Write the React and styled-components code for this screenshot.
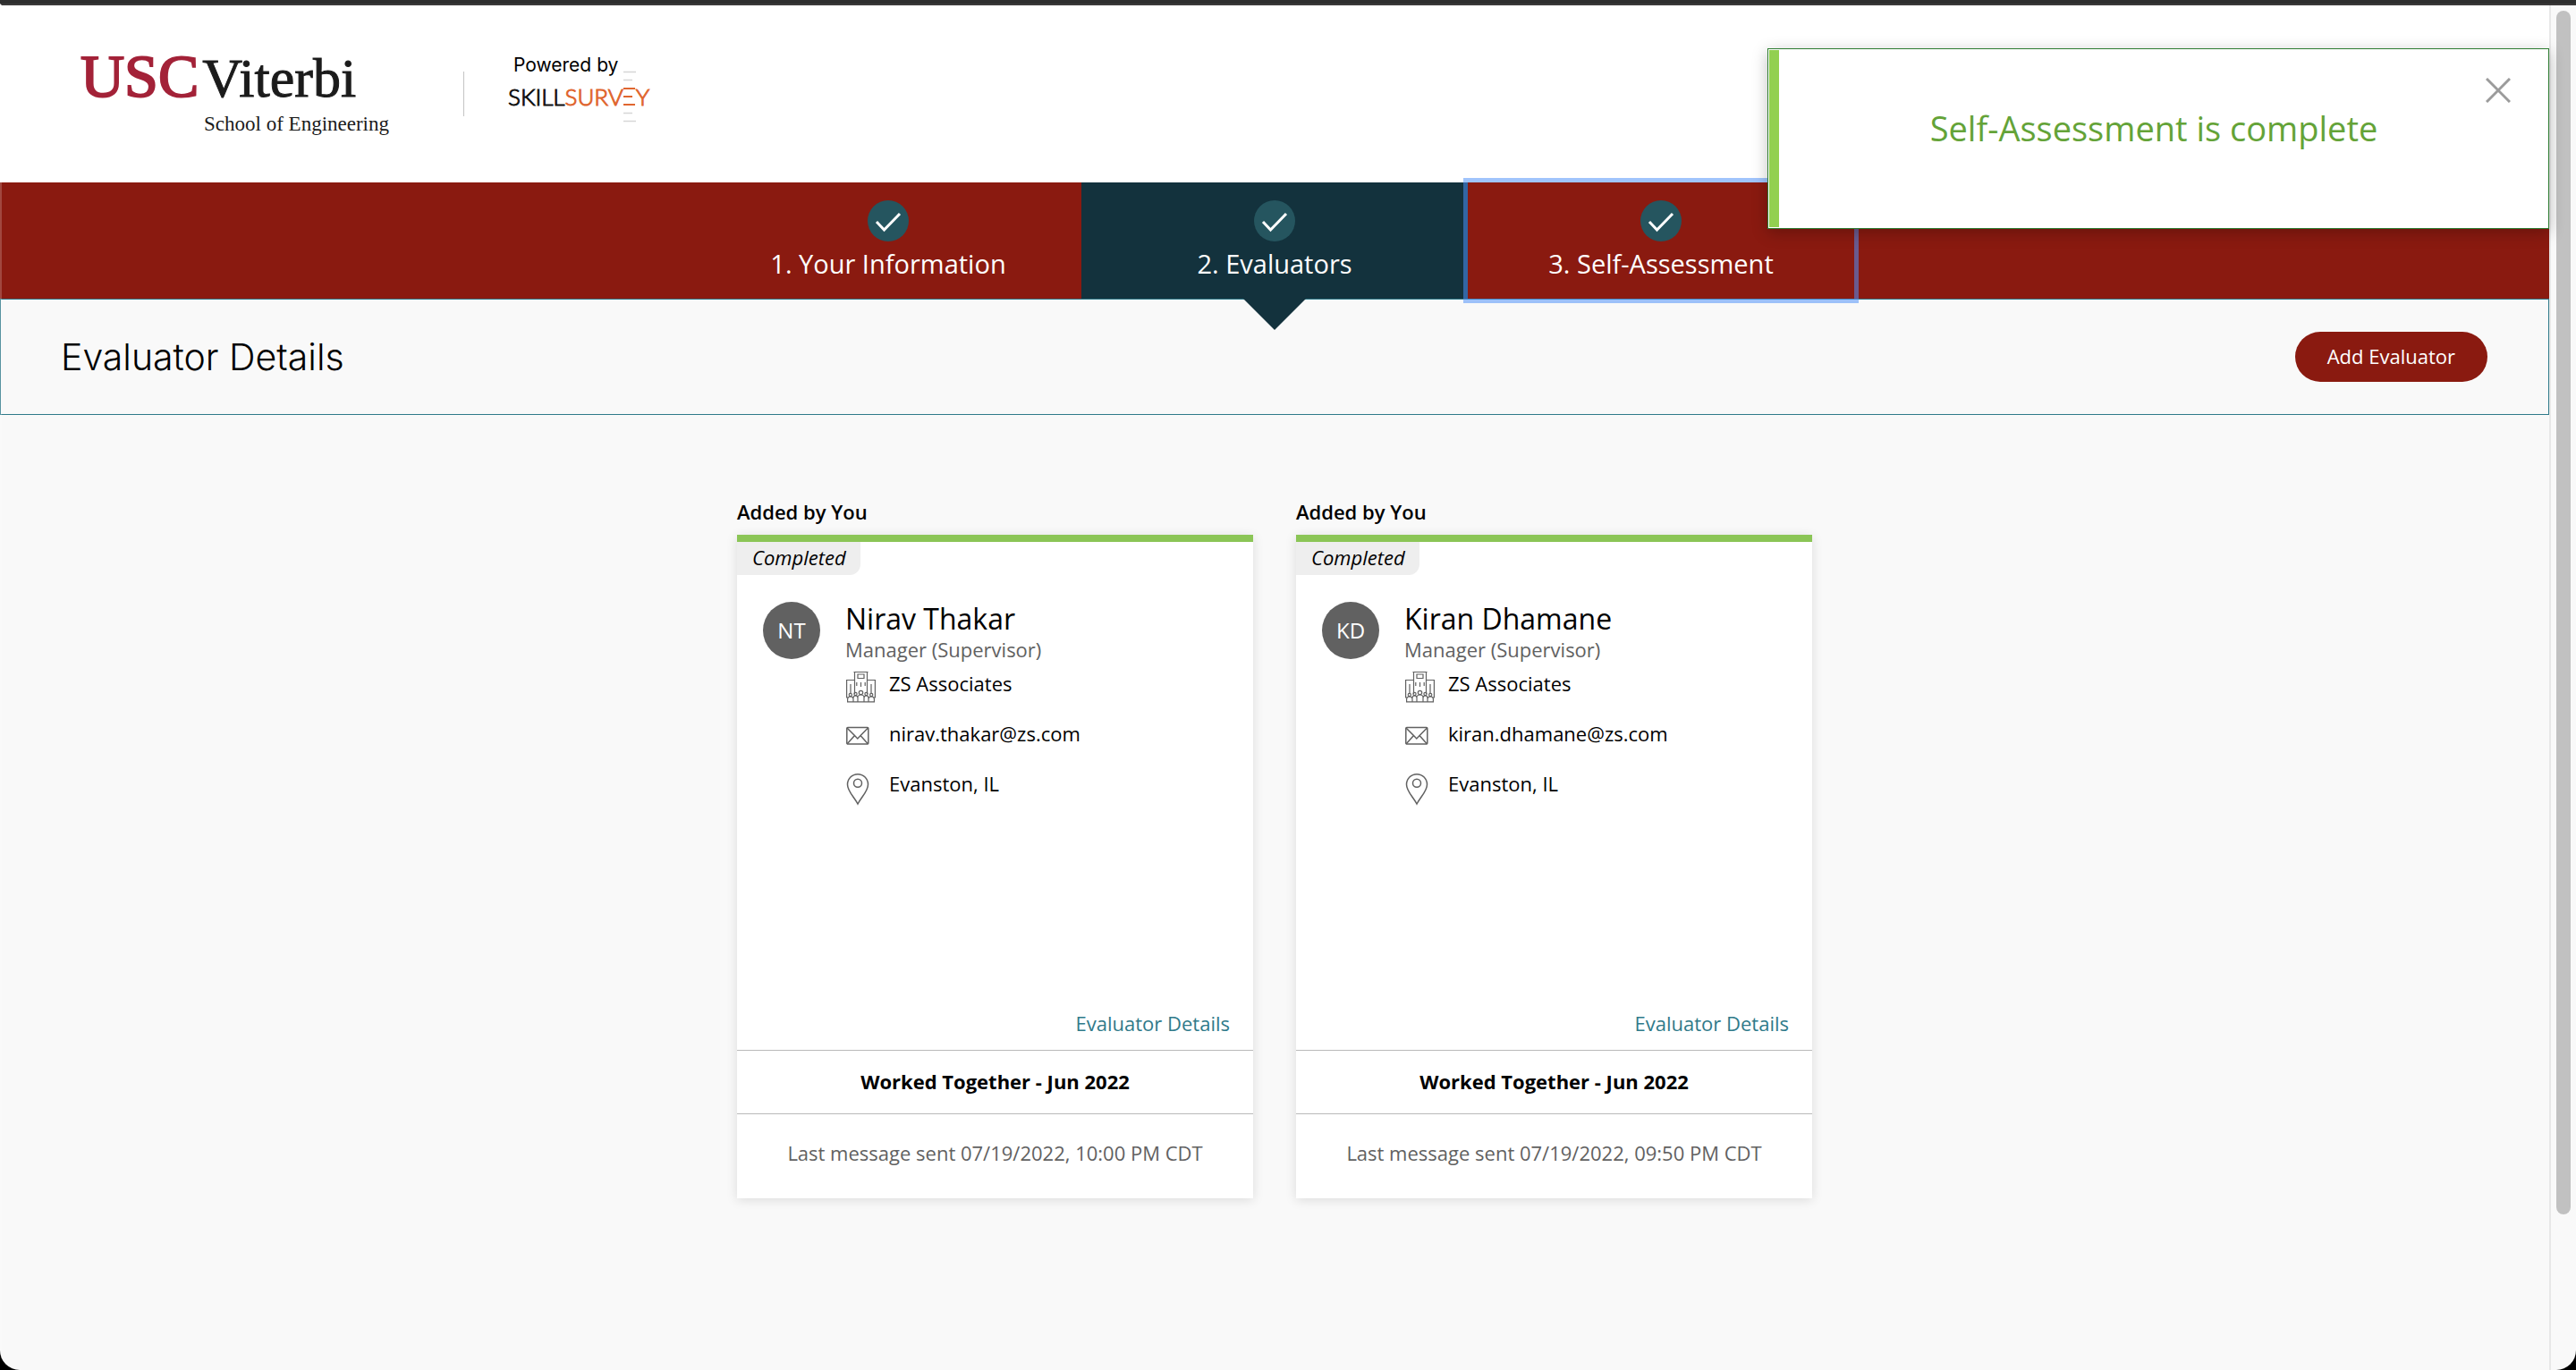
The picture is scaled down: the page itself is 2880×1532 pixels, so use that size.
import React from "react";
import styled, { createGlobalStyle } from "styled-components";

const color = {
  brand: "#8a1a10",
  navy: "#13323d",
  teal: "#25555f",
  link: "#2f7a8a",
  grey: "#616161",
  page: "#f9f9f9",
};

const GlobalStyle = createGlobalStyle`
  *, *::before, *::after { box-sizing: border-box; }
  html { background: #000; }
  body {
    margin: 0;
    font-family: "Open Sans", "Noto Sans", sans-serif;
    font-size: 22px;
    line-height: 32px;
    color: #000;
  }
  h1, h2, p, ul, ol { margin: 0; padding: 0; font-weight: 400; }
  ul, ol { list-style: none; }
  button { font: inherit; border: 0; padding: 0; cursor: pointer; }
  a { text-decoration: none; }
`;

const Window = styled.div`
  position: relative;
  display: flex;
  min-height: 100vh;
  border-top: 4px solid #2e2e2e;
  border-radius: 0 0 22px 22px;
  background: ${color.page};
  overflow: hidden;

  &::after {
    content: "";
    position: absolute;
    inset: 0;
    border-top: 2px solid #3b3939;
    border-left: 2px solid rgba(255, 255, 255, 0.2);
    pointer-events: none;
  }
`;

const Page = styled.div`
  position: relative;
  flex: 1;
  min-width: 0;
  padding-top: 2px;
`;

const ScrollTrack = styled.div`
  flex: none;
  width: 30px;
  padding: 8px 6px;
  border-left: 2px solid #e8e8e8;
`;

const ScrollThumb = styled.div`
  width: 16px;
  height: 89%;
  border-radius: 8px;
  background: #c1c1c1;
`;

const Header = styled.header`
  display: flex;
  align-items: flex-start;
  height: 198px;
  padding: 43px 90px 0;
  background: #fff;
`;

const SchoolLogo = styled.div`
  display: flex;
  flex-direction: column;
  align-items: flex-end;
  width: 345px;
  font-family: "Liberation Serif", serif;
  color: #1b1b1b;
`;

const SchoolName = styled.div`
  display: flex;
  align-items: baseline;
  align-self: flex-start;
  gap: 4px;
  font-size: 62px;
  line-height: 72px;
  -webkit-text-stroke: 1px;
`;

const Usc = styled.span`
  font-size: 68px;
  color: #a32238;
  -webkit-text-stroke: 2px;
`;

const SchoolUnit = styled.div`
  font-size: 23px;
  line-height: 32px;
`;

const Divider = styled.div`
  width: 1px;
  height: 50px;
  margin: 31px 49px 0 83px;
  background: #c4c4c4;
`;

const Vendor = styled.div`
  display: flex;
  flex-direction: column;
  gap: 7px;
  padding-top: 10px;
`;

const PoweredBy = styled.div`
  padding-left: 6px;
  font-family: Inter, sans-serif;
  font-size: 21px;
  line-height: 28px;
`;

const VendorLogo = styled.div`
  display: flex;
  align-items: center;
  height: 28px;
  font-family: Lato, sans-serif;
  font-weight: 300;
  font-size: 26px;
  line-height: 28px;
  color: #111;
  -webkit-text-stroke: 1px;
`;

const Accent = styled.span`
  color: #e0662f;
`;

const Bars = styled.svg`
  flex: none;
`;

const Steps = styled.ol`
  display: flex;
  justify-content: center;
  background: ${color.brand};
`;

const Step = styled.li`
  width: 432px;
`;

const StepButton = styled.button`
  position: relative;
  display: flex;
  flex-direction: column;
  align-items: center;
  gap: 4px;
  width: 100%;
  height: 130px;
  padding-top: 20px;
  font-size: 29px;
  line-height: 42px;
  color: #fff;
  background: ${(p) => (p.$current ? color.navy : color.brand)};
  outline: none;
  z-index: ${(p) => (p.$focused ? 2 : 1)};
  box-shadow: ${(p) => (p.$focused ? "0 0 0 5px rgba(80, 146, 250, 0.54)" : "none")};

  &::after {
    content: "";
    display: ${(p) => (p.$current ? "block" : "none")};
    position: absolute;
    top: 100%;
    left: 50%;
    margin-left: -35px;
    border: 35px solid transparent;
    border-top-color: ${color.navy};
    border-bottom-width: 0;
  }
`;

const TitleBar = styled.section`
  display: flex;
  align-items: center;
  justify-content: space-between;
  height: 130px;
  padding: 0 68px 0 67px;
  border: 1px solid ${color.link};
  background: ${color.page};
`;

const Title = styled.h1`
  font-family: Inter, sans-serif;
  font-weight: 300;
  font-size: 41px;
  line-height: 56px;
`;

const AddButton = styled.button`
  height: 56px;
  padding: 0 36px 2px;
  border-radius: 28px;
  font-size: 22px;
  line-height: 32px;
  color: #fff;
  background: ${color.brand};
`;

const Evaluators = styled.main`
  display: flex;
  justify-content: center;
  gap: 48px;
  padding: 92px 48px 96px;
`;

const Evaluator = styled.section`
  width: 577px;
`;

const AddedBy = styled.h2`
  margin-bottom: 10px;
  font-size: 22px;
  line-height: 32px;
  font-weight: 600;
`;

const Card = styled.article`
  border-top: 8px solid #8bc556;
  background: #fff;
  box-shadow: 0 2px 12px rgba(0, 0, 0, 0.12);
`;

const CardBody = styled.div`
  display: flex;
  flex-direction: column;
  align-items: flex-start;
  min-height: 568px;
`;

const Status = styled.div`
  height: 37px;
  padding: 1px 16px 0 17px;
  border-bottom-right-radius: 12px;
  font-size: 22px;
  line-height: 32px;
  font-style: italic;
  background: #eee;
`;

const Person = styled.div`
  display: flex;
  flex: 1;
  gap: 28px;
  padding: 30px 29px;
`;

const Avatar = styled.div`
  display: flex;
  flex: none;
  align-items: center;
  justify-content: center;
  width: 64px;
  height: 64px;
  border-radius: 50%;
  font-size: 24px;
  color: #fff;
  background: ${color.grey};
`;

const Name = styled.p`
  font-size: 32px;
  line-height: 38px;
`;

const Role = styled.p`
  padding-bottom: 2px;
  line-height: 30px;
  color: ${color.grey};
`;

const Facts = styled.ul`
  display: flex;
  flex-direction: column;
  gap: 12px;
`;

const Fact = styled.li`
  display: flex;
  gap: 13px;
  height: 44px;
  line-height: 42px;
`;

const FactIcon = styled.svg`
  flex: none;
  width: 36px;
  height: 46px;
  fill: none;
  stroke: ${color.grey};
  stroke-width: ${(p) => (p.$fine ? 1.2 : 1.5)};
`;

const DetailsLink = styled.a`
  align-self: flex-end;
  margin: 0 26px 14px;
  color: ${color.link};
`;

const Worked = styled.p`
  padding: 18px 0 20px;
  border-top: 1px solid #b9b9b9;
  border-bottom: 1px solid #b9b9b9;
  font-weight: 700;
  text-align: center;
`;

const LastMessage = styled.p`
  padding: 27px 0 35px;
  text-align: center;
  color: ${color.grey};
`;

const Toast = styled.div`
  position: absolute;
  z-index: 3;
  top: 50px;
  right: 0;
  display: flex;
  width: 874px;
  height: 202px;
  padding: 1px 0;
  border: 1px solid #2e7d32;
  background: #fff;
  box-shadow: 0 4px 16px rgba(0, 0, 0, 0.25);

  &::before {
    content: "";
    width: 11px;
    margin-left: 1px;
    background: #92d050;
  }
`;

const ToastText = styled.p`
  flex: 1;
  padding: 59px 0 0 48px;
  font-size: 38px;
  line-height: 56px;
  text-align: center;
  color: #64a338;
`;

const Close = styled.button`
  width: 28px;
  height: 28px;
  margin: 31px 42px 0 0;
  background: none;

  svg { display: block; }
`;

const CheckIcon = () => (
  <svg width="46" height="46" viewBox="0 0 46 46" aria-hidden="true">
    <circle cx="23" cy="23" r="23" fill={color.teal} />
    <path d="M10 24l8.500 9L36 15" fill="none" stroke="#fff" strokeWidth="3" />
  </svg>
);

const BuildingIcon = () => (
  <FactIcon $fine viewBox="0 0 36 46" aria-hidden="true">
    <path d="M3 37H1.600V17.500H10.500M24.500 17.500h8.900V37H32M10.500 33V8.500h14V33M9.500 8.500h16M14 11h7v4.500h-7zM6 22v10M29 22v10M12.800 20v4M17.500 20v5M22.200 20v4" />
    <circle cx="5.800" cy="34" r="1.600" />
    <circle cx="11.500" cy="33" r="1.600" />
    <circle cx="17.500" cy="31.500" r="2.200" />
    <circle cx="23.500" cy="33" r="1.600" />
    <circle cx="29.200" cy="34" r="1.600" />
    <path d="M2.600 41.800v-3q0-2.800 3.200-2.800t3.200 2.800v3M9 37.500q0-2.500 2.500-2.500t2.500 2.500v4.300M14 37q0-3 3.500-3t3.500 3v4.800M21 37.500q0-2.500 2.500-2.500t2.500 2.500v4.300M26 38.800q0-2.800 3.200-2.800t3.200 2.800v3M2 41.800h31" />
  </FactIcon>
);

const MailIcon = () => (
  <FactIcon viewBox="0 0 36 46" aria-hidden="true">
    <rect x="1.800" y="14.500" width="24" height="18.500" rx="1" />
    <path d="M2 15l8.500 8.500 3.300 3.500 3.300-3.500L25.500 15M2 33l8.500-9.500M25.500 33L17 23.500" />
  </FactIcon>
);

const PinIcon = () => (
  <FactIcon viewBox="0 0 36 46" aria-hidden="true">
    <path d="M14 44C10 36 2.500 30 2.500 22.200a11.500 11.500 0 0 1 23 0C25.500 30 18 36 14 44z" />
    <circle cx="14" cy="20.800" r="4.500" />
  </FactIcon>
);

const steps = [
  { label: "1. Your Information" },
  { label: "2. Evaluators", current: true },
  { label: "3. Self-Assessment", focused: true },
];

const evaluators = [
  {
    initials: "NT",
    name: "Nirav Thakar",
    email: "nirav.thakar@zs.com",
    sent: "07/19/2022, 10:00 PM CDT",
  },
  {
    initials: "KD",
    name: "Kiran Dhamane",
    email: "kiran.dhamane@zs.com",
    sent: "07/19/2022, 09:50 PM CDT",
  },
];

const EvaluatorCard = ({ initials, name, email, sent }) => (
  <Evaluator>
    <AddedBy>Added by You</AddedBy>
    <Card>
      <CardBody>
        <Status>Completed</Status>
        <Person>
          <Avatar>{initials}</Avatar>
          <div>
            <Name>{name}</Name>
            <Role>Manager (Supervisor)</Role>
            <Facts>
              <Fact><BuildingIcon />ZS Associates</Fact>
              <Fact><MailIcon />{email}</Fact>
              <Fact><PinIcon />Evanston, IL</Fact>
            </Facts>
          </div>
        </Person>
        <DetailsLink href="#details">Evaluator Details</DetailsLink>
      </CardBody>
      <Worked>Worked Together - Jun 2022</Worked>
      <LastMessage>Last message sent {sent}</LastMessage>
    </Card>
  </Evaluator>
);

export default function App() {
  return (
    <>
      <GlobalStyle />
      <Window>
        <Page>
          <Header>
            <SchoolLogo>
              <SchoolName><Usc>USC</Usc><span>Viterbi</span></SchoolName>
              <SchoolUnit>School of Engineering</SchoolUnit>
            </SchoolLogo>
            <Divider />
            <Vendor>
              <PoweredBy>Powered by</PoweredBy>
              <VendorLogo>
                <span>SKILL</span>
                <Accent>SURV</Accent>
                <Bars width="14" height="58" viewBox="0 0 14 58" aria-label="E">
                  <path d="M0 1.500h14M0 10.500h10M0 47.500h10M0 56.500h14" stroke="#d6d6d6" strokeWidth="1.500" />
                  <path d="M0 20h13M0 29h10M0 38h13" stroke="#e0662f" strokeWidth="2" />
                </Bars>
                <Accent>Y</Accent>
              </VendorLogo>
            </Vendor>
          </Header>
          <nav>
            <Steps>
              {steps.map((s) => (
                <Step key={s.label}>
                  <StepButton $current={s.current} $focused={s.focused}>
                    <CheckIcon />
                    {s.label}
                  </StepButton>
                </Step>
              ))}
            </Steps>
          </nav>
          <TitleBar>
            <Title>Evaluator Details</Title>
            <AddButton>Add Evaluator</AddButton>
          </TitleBar>
          <Evaluators>
            {evaluators.map((e) => <EvaluatorCard key={e.initials} {...e} />)}
          </Evaluators>
          <Toast role="status">
            <ToastText>Self-Assessment is complete</ToastText>
            <Close aria-label="Close">
              <svg width="28" height="28" viewBox="0 0 28 28" aria-hidden="true">
                <path d="M1 1l26 26M27 1L1 27" stroke="#9b9b9b" strokeWidth="3" />
              </svg>
            </Close>
          </Toast>
        </Page>
        <ScrollTrack><ScrollThumb /></ScrollTrack>
      </Window>
    </>
  );
}
